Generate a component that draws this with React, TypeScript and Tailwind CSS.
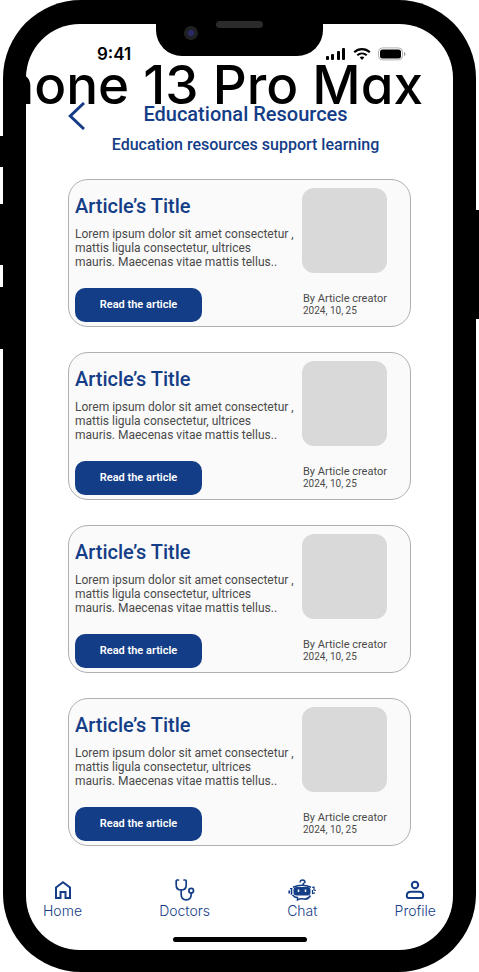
import React from "react";

const articles = [1, 2, 3, 4];

function StatusIcons() {
  return (
    <div className="flex items-center gap-[7px]">
      <svg width="20" height="14" viewBox="0 0 20 14" aria-hidden="true">
        <rect x="0" y="9" width="3" height="4" rx="1" />
        <rect x="5" y="7" width="3" height="6" rx="1" />
        <rect x="11" y="4" width="3" height="9" rx="1" />
        <rect x="16" y="1" width="3" height="12" rx="1" />
      </svg>
      <svg width="18" height="14" viewBox="0 0 18 14" fill="none" stroke="#000" strokeWidth="2.2" aria-hidden="true">
        <path d="M1.2 5.2C5.6 1 12.4 1 16.8 5.2" />
        <path d="M4.3 8.3C7 5.9 11 5.9 13.7 8.3" />
        <path d="M6.6 10.3C8 9.1 10 9.1 11.4 10.3L9 12.9Z" fill="#000" stroke="none" />
      </svg>
      <svg width="28" height="14" viewBox="0 0 28 14" aria-hidden="true">
        <rect x="0.5" y="0.9" width="24" height="12" rx="4" fill="none" stroke="#b0b0b0" />
        <rect x="2" y="2.4" width="21" height="9" rx="2.5" />
        <path d="M26 5v4c1-.4 1.5-1.2 1.5-2S27 5.4 26 5Z" fill="#a0a0a0" />
      </svg>
    </div>
  );
}

function HomeIcon() {
  return (
    <svg width="20" height="20" viewBox="0 0 20 20" fill="none" stroke="#143d87" strokeWidth="2" aria-hidden="true">
      <path d="M3 7.5 10 2.3 17 7.5V18H12.5V12H7.5V18H3Z" />
    </svg>
  );
}

function DoctorsIcon() {
  return (
    <svg width="20" height="22" viewBox="0 0 20 22" fill="none" stroke="#143d87" strokeWidth="1.7" strokeLinecap="round" strokeLinejoin="round" aria-hidden="true">
      <path d="M3.5 1H2.2Q1.2 1 1.2 2V6Q1.2 11 6.2 11T11.2 6V2Q11.2 1 10.2 1H9" />
      <path d="M6.2 11V15.5Q6.2 20.8 11.2 20.8T16.2 15.5V14" />
      <circle cx="16.2" cy="11.7" r="2.3" />
    </svg>
  );
}

function ChatIcon() {
  return (
    <svg width="28" height="22" viewBox="0 0 28 22" fill="none" stroke="#143d87" aria-hidden="true">
      <path d="M12 3.6Q12 1 14.5 1T17 3.4L15.2 4.6V7" strokeWidth="1.4" />
      <path d="M5 8.2Q14 4.2 23 8.2" strokeWidth="1.6" />
      <rect x="5.5" y="8" width="17" height="8.5" rx="3" fill="#143d87" stroke="none" />
      <path d="M1.2 11.5V14.5M3.5 10V15.8" strokeWidth="1.6" />
      <path d="M2 9.5H4.5M24 8.5 26 8V11L28 11.5M24.5 11V14.5L27 13.8" strokeWidth="1.2" />
      <path d="M4.5 16Q6.5 18.5 9.5 18.5V21Q12 19.2 16 20T22.5 16.5" strokeWidth="1.5" />
      <path d="M10.5 10.5V13M17.5 10.5V13" stroke="#fff" strokeWidth="1.5" />
    </svg>
  );
}

function ProfileIcon() {
  return (
    <svg width="20" height="20" viewBox="0 0 20 20" fill="none" stroke="#143d87" strokeWidth="2" aria-hidden="true">
      <circle cx="10" cy="5" r="3.2" />
      <path d="M1.8 15.5Q1.8 11.7 5.8 11.7H14.2Q18.2 11.7 18.2 15.5Q18.2 18 16.2 18H3.8Q1.8 18 1.8 15.5Z" />
    </svg>
  );
}

const tabs = [
  { label: "Home", icon: <HomeIcon /> },
  { label: "Doctors", icon: <DoctorsIcon /> },
  { label: "Chat", icon: <ChatIcon /> },
  { label: "Profile", icon: <ProfileIcon /> },
];

function ArticleCard() {
  return (
    <article className="flex justify-between rounded-[20px] border border-[#b0b0b0] bg-[#fafafa] pt-2 pr-[23px] pb-1 pl-1.5">
      <div className="flex flex-col items-start">
        <h2 className="mt-1.5 text-xl leading-6 font-medium text-[#143d87]">Article’s Title</h2>
        <p className="mt-[9px] text-xs leading-[14px] whitespace-nowrap text-[#4a4a4a]">
          Lorem ipsum dolor sit amet consectetur ,<br />
          mattis ligula consectetur, ultrices
          <br />
          mauris. Maecenas vitae mattis tellus..
        </p>
        <button type="button" className="mt-auto h-[34px] w-[127px] rounded-[10px] bg-[#143d87] text-[11px] font-semibold text-white">
          Read the article
        </button>
      </div>
      <div className="flex shrink-0 flex-col">
        <div className="size-[85px] rounded-xl bg-[#d9d9d9]" />
        <p className="mt-[19px] pl-px text-[11px] leading-[13px] whitespace-nowrap text-[#4a4a4a]">By Article creator</p>
        <p className="mb-[5px] pl-px text-[10px] leading-3 text-[#4a4a4a]">2024, 10, 25</p>
      </div>
    </article>
  );
}

export default function App() {
  return (
    <div className="relative overflow-hidden bg-white px-[3px] font-[Roboto,sans-serif]">
      <div className="absolute top-[136px] left-0 h-[31px] w-1 bg-black" />
      <div className="absolute top-[204px] left-0 h-[61px] w-1 bg-black" />
      <div className="absolute top-[287px] left-0 h-[62px] w-1 bg-black" />
      <div className="absolute top-[210px] right-0 h-[109px] w-1 bg-black" />

      <div className="rounded-[78px] bg-black px-[23px] pt-6 pb-[22px]">
        <div className="relative flex flex-col rounded-[54px] bg-white">
          <div className="absolute inset-x-0 top-0 mx-auto h-8 w-[167px] rounded-b-[26px] bg-black">
            <div className="absolute top-0.5 left-7 flex size-3.5 items-center justify-center rounded-full bg-[#202124]">
              <div className="size-1.5 rounded-full bg-[#2b2b68]" />
            </div>
            <div className="absolute inset-x-0 -top-[3px] mx-auto h-[7px] w-[47px] rounded-full bg-[#2b2b2b]" />
          </div>

          <div className="flex items-center justify-between pt-5 pr-[47px] pl-[71px]">
            <span className="font-[Inter,sans-serif] text-[17px] leading-5 font-semibold">9:41</span>
            <StatusIcons />
          </div>

          <header className="mt-[34px] flex px-[42px] text-[#143d87]">
            <button type="button" aria-label="Back" className="mt-1 h-7 w-4 shrink-0">
              <svg width="17" height="28" viewBox="0 0 17 28" fill="none" stroke="#143d87" strokeWidth="3" aria-hidden="true">
                <path d="M16 1 2.3 14 16 27" />
              </svg>
            </button>
            <div className="flex-1 pr-1 text-center">
              <h1 className="mt-1 text-xl leading-6 font-medium">Educational Resources</h1>
              <p className="mt-[9px] text-base leading-5 font-medium">Education resources support learning</p>
            </div>
          </header>

          <main className="mt-6 flex flex-col gap-[25px] px-[42px]">
            {articles.map((id) => (
              <ArticleCard key={id} />
            ))}
          </main>

          <nav className="mt-8 flex justify-between px-[17px]">
            {tabs.map((tab) => (
              <a key={tab.label} href="#" className="flex flex-col items-center font-[Inter,sans-serif] text-sm leading-[18px] font-light text-[#143d87]">
                <span className="flex h-6 items-center">{tab.icon}</span>
                {tab.label}
              </a>
            ))}
          </nav>
          <div className="mx-auto mt-[17px] mb-2 h-[5px] w-[134px] rounded-full bg-black" />
        </div>
      </div>

      <div className="pointer-events-none absolute top-[53px] right-[56px] font-[Inter,sans-serif] text-[53px] leading-[64px] font-medium whitespace-nowrap text-black [font-feature-settings:'cv11']">
        iPhone 13 Pro Max
      </div>
    </div>
  );
}
